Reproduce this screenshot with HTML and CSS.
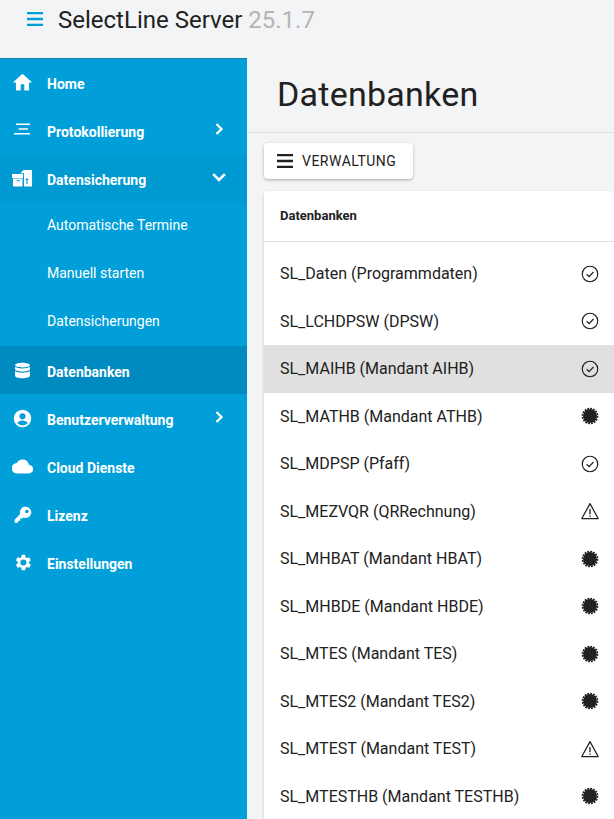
FILE: index.html
```html
<!DOCTYPE html>
<html lang="de">
<head>
<meta charset="utf-8">
<title>SelectLine Server</title>
<link rel="stylesheet" href="styles.css">
</head>
<body>
<svg class="defs" width="0" height="0" aria-hidden="true">
  <symbol id="ok" viewBox="0 0 24 24"><circle cx="12" cy="12" r="9.300" fill="none" stroke="currentColor" stroke-width="1.400"/><path fill="none" stroke="currentColor" stroke-width="1.500" d="M8 12.300l2.900 2.900 5.300-5.600"/></symbol>
  <symbol id="warn" viewBox="0 0 24 24"><path fill="none" stroke="currentColor" stroke-width="1.500" stroke-linejoin="round" d="M12 3.200 2.200 21h19.600z"/><path fill="currentColor" d="M11.200 9.500h1.600v6.500h-1.600zM11.200 17.300h1.600v1.700h-1.600z"/></symbol>
  <symbol id="burst" viewBox="0 0 24 24"><circle cx="12" cy="12" r="8.300" fill="currentColor"/><circle cx="12" cy="12" r="9" fill="none" stroke="currentColor" stroke-width="2" stroke-dasharray="2.200 1.334"/></symbol>
</svg>
<header class="topbar">
  <svg class="menu-icon" viewBox="0 0 16 14"><path d="M0 1h16M0 7h16M0 13h16"/></svg>
  <span class="brand">SelectLine Server</span>
  <span class="version">25.1.7</span>
</header>
<div class="shell">
  <nav class="sidebar">
    <a class="nav-item">
      <svg class="nav-icon" viewBox="0 0 24 24"><path d="M10 21v-7h4v7h5.500v-9H23L12 2 1 12h3.500v9z"/></svg>
      <span class="nav-label">Home</span>
    </a>
    <a class="nav-item">
      <svg class="nav-icon" viewBox="0 0 24 24"><path d="M4.600 4h16v1.700h-16zM7.600 9.500h10.700v1.700H7.600zM2.300 14.900h18.300v1.700H2.300z"/></svg>
      <span class="nav-label">Protokollierung</span>
      <svg class="chev" viewBox="0 0 12 12"><path d="M3.500 1 8.500 6l-5 5"/></svg>
    </a>
    <a class="nav-item open">
      <svg class="nav-icon" viewBox="0 0 24 24"><path fill-rule="evenodd" d="M0 6.900h12.600v4.500H0zM1.100 12H12v9H1.100zM5.300 14v1.200H9V14zM9.500 6 13 2.300h9.900V21h-9.200V6zM17.100 11.400l-2 2.400h1.400v4.700h1.200v-4.700h1.400z"/></svg>
      <span class="nav-label">Datensicherung</span>
      <svg class="chev" viewBox="0 0 12 12"><path d="M1 3.500 6 8.500l5-5"/></svg>
    </a>
    <div class="subnav">
      <a class="sub-item">Automatische Termine</a>
      <a class="sub-item">Manuell starten</a>
      <a class="sub-item">Datensicherungen</a>
    </div>
    <a class="nav-item active">
      <svg class="nav-icon" viewBox="0 0 24 24"><path d="M12 3C7.300 3 3.500 4 3.500 5.800S7.300 8.500 12 8.500s8.500-1 8.500-2.700S16.700 3 12 3zM3.500 7.700v3c0 1.500 3.800 2.500 8.500 2.500s8.500-1 8.500-2.500v-3C18.700 9 15.500 9.600 12 9.600S5.300 9 3.500 7.700zM3.500 12.700v5.300c0 1.600 3.800 2.800 8.500 2.800s8.500-1.200 8.500-2.800v-5.300c-1.800 1.300-5 1.900-8.500 1.900s-6.700-.6-8.500-1.900z"/></svg>
      <span class="nav-label">Datenbanken</span>
    </a>
    <a class="nav-item">
      <svg class="nav-icon" viewBox="0 0 24 24"><path fill-rule="evenodd" d="M12 2a10 10 0 1 0 0 20 10 10 0 0 0 0-20zm0 4a3.500 3.500 0 1 1 0 7 3.500 3.500 0 0 1 0-7zm0 14a8 8 0 0 1-6-2.800c.5-1.900 4-2.900 6-2.900s5.500 1 6 2.900A8 8 0 0 1 12 20z"/></svg>
      <span class="nav-label">Benutzerverwaltung</span>
      <svg class="chev" viewBox="0 0 12 12"><path d="M3.500 1 8.500 6l-5 5"/></svg>
    </a>
    <a class="nav-item">
      <svg class="nav-icon" viewBox="0 0 24 24"><path d="M19.400 10A7.500 7.500 0 0 0 5.400 8 6 6 0 0 0 6 20h13a5 5 0 0 0 .4-10z"/></svg>
      <span class="nav-label">Cloud Dienste</span>
    </a>
    <a class="nav-item">
      <svg class="nav-icon" viewBox="0 0 24 24"><path fill-rule="evenodd" d="M15.500 3a6.500 6.500 0 0 0-6.200 8.500L3 18v3.500h4V19h2.500v-2.500H12l1-1a6.500 6.500 0 1 0 2.500-12.500zm1.500 3.500a2 2 0 1 1 0 4 2 2 0 0 1 0-4z"/></svg>
      <span class="nav-label">Lizenz</span>
    </a>
    <a class="nav-item">
      <svg class="nav-icon" viewBox="0 0 24 24"><path fill-rule="evenodd" d="M19.400 13a7.500 7.500 0 0 0 0-2l2.100-1.600-2-3.500-2.500 1a7.500 7.500 0 0 0-1.700-1L15 3.200h-4l-.4 2.700a7.500 7.500 0 0 0-1.700 1l-2.500-1-2 3.500L6.600 11a7.500 7.500 0 0 0 0 2l-2.100 1.600 2 3.500 2.500-1c.5.400 1.100.8 1.700 1l.4 2.700h4l.4-2.700c.6-.2 1.200-.6 1.700-1l2.500 1 2-3.500zM13 15.500a3.500 3.500 0 1 1 0-7 3.500 3.500 0 0 1 0 7z"/></svg>
      <span class="nav-label">Einstellungen</span>
    </a>
  </nav>
  <main class="content">
    <div class="page-head"><h1>Datenbanken</h1></div>
    <div class="page-body">
      <button class="tool-btn">
        <svg class="tool-icon" viewBox="0 0 16 14"><path d="M0 1.200h16M0 7h16M0 12.800h16"/></svg>
        VERWALTUNG
      </button>
      <section class="card">
        <div class="card-head">Datenbanken</div>
        <ul class="db-list">
          <li class="db-row"><span>SL_Daten (Programmdaten)</span><svg class="st"><use href="#ok"/></svg></li>
          <li class="db-row"><span>SL_LCHDPSW (DPSW)</span><svg class="st"><use href="#ok"/></svg></li>
          <li class="db-row selected"><span>SL_MAIHB (Mandant AIHB)</span><svg class="st"><use href="#ok"/></svg></li>
          <li class="db-row"><span>SL_MATHB (Mandant ATHB)</span><svg class="st"><use href="#burst"/></svg></li>
          <li class="db-row"><span>SL_MDPSP (Pfaff)</span><svg class="st"><use href="#ok"/></svg></li>
          <li class="db-row"><span>SL_MEZVQR (QRRechnung)</span><svg class="st"><use href="#warn"/></svg></li>
          <li class="db-row"><span>SL_MHBAT (Mandant HBAT)</span><svg class="st"><use href="#burst"/></svg></li>
          <li class="db-row"><span>SL_MHBDE (Mandant HBDE)</span><svg class="st"><use href="#burst"/></svg></li>
          <li class="db-row"><span>SL_MTES (Mandant TES)</span><svg class="st"><use href="#burst"/></svg></li>
          <li class="db-row"><span>SL_MTES2 (Mandant TES2)</span><svg class="st"><use href="#burst"/></svg></li>
          <li class="db-row"><span>SL_MTEST (Mandant TEST)</span><svg class="st"><use href="#warn"/></svg></li>
          <li class="db-row"><span>SL_MTESTHB (Mandant TESTHB)</span><svg class="st"><use href="#burst"/></svg></li>
        </ul>
      </section>
    </div>
  </main>
</div>
</body>
</html>
```
FILE: styles.css
```css
* { box-sizing: border-box; }
html, body { margin: 0; height: 100%; overflow: hidden; }
body { font-family: Roboto, "Liberation Sans", sans-serif; background: #f3f4f6; color: #212121; }
.defs { position: absolute; }

.topbar { height: 58px; display: flex; align-items: flex-start; padding: 6px 0 0 27px; background: #f3f4f6; }
.menu-icon { width: 16px; height: 14px; margin-top: 6px; margin-right: 15px; fill: none; stroke: #009fd9; stroke-width: 2.300; }
.brand { font-size: 24px; line-height: 28px; color: #212121; }
.version { font-size: 24px; line-height: 28px; margin-left: 6px; color: #b4b4b4; }

.shell { display: flex; height: 761px; }
.sidebar { width: 247px; flex: none; background: #009fd9; padding-top: 2px; box-shadow: inset 0 2px 1px -1px rgba(60,80,90,.45); }
.nav-item { display: flex; align-items: center; height: 48px; padding: 0 17px 0 12px; color: #fff; }
.nav-icon { width: 21px; height: 21px; flex: none; fill: #fff; margin-right: 14px; margin-bottom: 3px; }
.nav-label { flex: 1; font-size: 14px; font-weight: 700; }
.chev { width: 12px; height: 12px; flex: none; fill: none; stroke: #fff; stroke-width: 2.300; margin-bottom: 6px; margin-right: 5px; }
.open { height: 46px; padding-top: 2px; background: #009ad3; }
.open .chev { width: 14px; height: 14px; margin-right: 4px; }
.subnav { margin-top: -1px; margin-bottom: 1px; }
.sub-item { display: flex; align-items: center; height: 48px; padding-left: 47px; font-size: 14px; color: #fff; }
.active { background: #008bc0; margin-bottom: 2px; }
.active .nav-label { padding-top: 4px; }
.active .nav-icon { margin-bottom: 0; }

.content { flex: 1; min-width: 0; }
.page-head { height: 75px; border-bottom: 1px solid #e0e0e0; padding: 14px 0 0 30px; }
h1 { margin: 0; font-size: 34px; line-height: 44px; font-weight: 400; letter-spacing: .25px; color: #212121; }
.page-body { padding: 10px 0 0 17px; }
.tool-btn { display: flex; align-items: center; width: 149px; height: 36px; padding: 0 0 0 13px; border: 0; border-radius: 4px; background: #fff; box-shadow: 0 1px 3px rgba(0,0,0,.3); font: 400 14px Roboto, sans-serif; letter-spacing: .5px; color: #212121; }
.tool-icon { width: 16px; height: 14px; margin-right: 9px; fill: none; stroke: #212121; stroke-width: 2.300; }
.card { margin-top: 12px; background: #fff; border-radius: 4px 4px 0 0; box-shadow: 0 1px 3px rgba(0,0,0,.2); }
.card-head { height: 51px; display: flex; align-items: center; padding: 0 0 2px 16px; font-size: 13px; font-weight: 700; border-bottom: 1px solid #e0e0e0; }
.db-list { list-style: none; margin: 0; padding: 8px 0 0; }
.db-row { display: flex; align-items: center; justify-content: space-between; height: 47.5px; padding: 0 16px; font-size: 16px; }
.selected { background: #e0e0e0; }
.st { width: 20px; height: 20px; flex: none; margin-right: -1.500px; color: #212121; }
```
